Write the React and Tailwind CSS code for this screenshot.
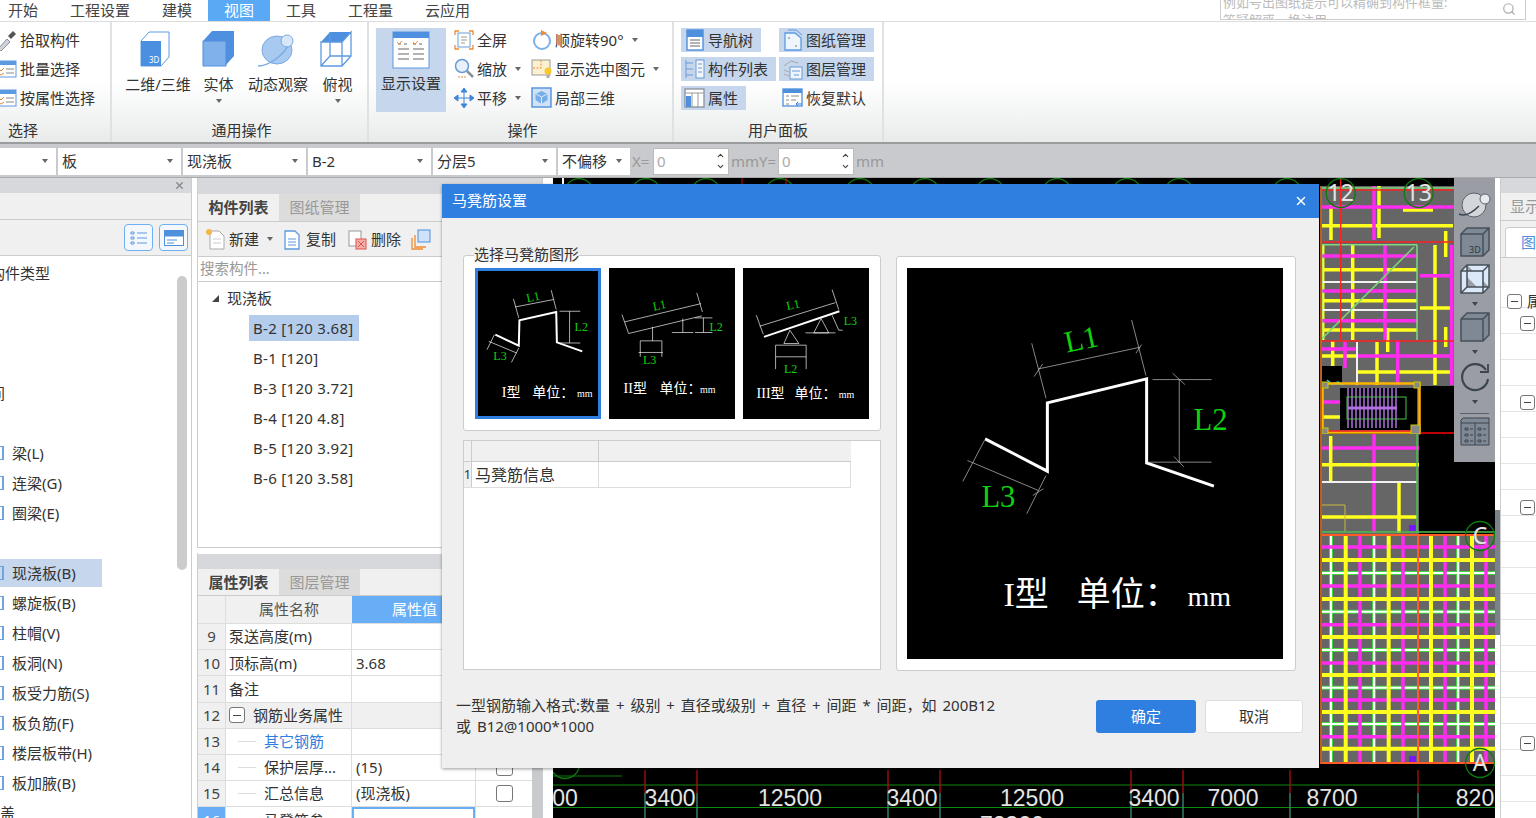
import React from 'react';
import { X, Search, ChevronUp, ChevronDown } from 'lucide-react';

const serif = '"Liberation Serif","Noto Sans CJK SC",serif';
const sans = '"Noto Sans","Noto Sans CJK SC",sans-serif';

const Caret = ({ className = '' }) => (
  <span className={`inline-block w-0 h-0 border-x-[3.5px] border-x-transparent border-t-[4px] border-t-[#666] ${className}`} />
);

// small ribbon icons
const Ico = ({ children, w = 22, h = 22, className = '' }) => (
  <svg width={w} height={h} viewBox="0 0 22 22" fill="none" className={`shrink-0 ${className}`}>{children}</svg>
);
const icons = {
  pick: <><path d="M2 20l9-10 3 3-9 9z" fill="#cfd4da" stroke="#8a9099" /><path d="M12 7l5-5 3 3-5 5z" fill="#555" /></>,
  batch: <><rect x="1" y="3" width="19" height="16" fill="#fff" stroke="#5c9ae0" /><rect x="1" y="3" width="19" height="4" fill="#5c9ae0" /><path d="M3 11l2 2 3-3M3 16l2 1 3-2" stroke="#e8862a" /><path d="M10 11h8M10 15h8" stroke="#888" /></>,
  full: <><path d="M2 6V2h4M16 2h4v4M2 16v4h4M16 20h4v-4" stroke="#ef8a32" strokeWidth="1.3" /><rect x="5" y="4" width="12" height="14" fill="#fff" stroke="#6a9bd4" /><path d="M8 8h6M8 11h6M8 14h4" stroke="#999" /></>,
  zoom: <><circle cx="9" cy="8" r="6.5" fill="#e8f1fb" stroke="#6a9bd4" strokeWidth="1.5" /><path d="M14 13l6 6" stroke="#8b9097" strokeWidth="2.5" /><path d="M5 19h8" stroke="#ef8a32" strokeDasharray="2 1" /></>,
  pan: <path d="M11 1l3 4H8zM11 21l3-4H8zM1 11l4-3v6zM21 11l-4-3v6zM5 11h12M11 5v12" fill="#3f86d8" stroke="#3f86d8" />,
  rotate: <><circle cx="11" cy="12" r="8" stroke="#7cb0e8" strokeWidth="2" /><path d="M10 1l6 3-6 3z" fill="#ef8a32" /></>,
  showsel: <><rect x="1" y="2" width="18" height="15" fill="#fdf0d0" stroke="#999" /><path d="M10 2v8H1" stroke="#ef8a32" strokeDasharray="2 1.5" /><circle cx="17" cy="13" r="3.5" fill="#f6c92f" /><path d="M15.500 17h3v3h-3z" fill="#aaa" /></>,
  local3d: <><rect x="1" y="1" width="19" height="19" fill="#cfe2f7" stroke="#4f90dc" strokeWidth="1.4" /><path d="M10.500 4l6 3v6l-6 4-6-4V7z" fill="#78aee8" /><path d="M10.500 10v7M5 7l5.500 3L16 7" stroke="#dbe9f8" /></>,
  nav: <><rect x="3" y="1" width="16" height="20" fill="#fff" stroke="#4f90dc" strokeWidth="1.4" /><path d="M3 1h16v7H3z" fill="#4f90dc" /><path d="M6 11h10M6 14h10M6 17h10" stroke="#666" /></>,
  list: <><rect x="12" y="2" width="8" height="18" fill="#f2f6fb" stroke="#6a9bd4" /><path d="M14 6h4M14 10h4M14 14h4M2 2v18M2 5h7M2 11h7M2 17h7" stroke="#6a9bd4" /></>,
  prop: <><rect x="1" y="2" width="19" height="18" fill="#fff" stroke="#8a9099" strokeWidth="1.3" /><path d="M1 6h19M8 6v14M14 6v14" stroke="#999" /><rect x="2" y="9" width="5" height="11" fill="#4f90dc" /></>,
  paper: <><path d="M3 4h10l6 5v12H3z" fill="#eef5fc" stroke="#5c9ae0" strokeWidth="1.3" /><path d="M6 1h8l6 5" stroke="#5c9ae0" /><path d="M7 8v2M15 17h-2" stroke="#777" /></>,
  layer: <><path d="M2 8l7-5 7 2M2 12l5 2M2 16l5 2" stroke="#aaa" /><rect x="8" y="9" width="12" height="12" fill="#eef5fc" stroke="#6a9bd4" /><path d="M10 13h8M12 17h5" stroke="#6a9bd4" /></>,
  reset: <><rect x="1" y="2" width="19" height="17" fill="#fff" stroke="#4f90dc" strokeWidth="1.3" /><rect x="1" y="2" width="19" height="4" fill="#4f90dc" /><path d="M4 9h3M9 9h8M4 13h3M9 13h5M4 17h3" stroke="#888" /><path d="M20 17h-6m2-2l-2 2 2 2" stroke="#2f7fdc" /></>,
  newdoc: <><path d="M5 3h9l5 5v13H5z" fill="#fff" stroke="#aaa" /><circle cx="4" cy="4" r="3" fill="#f4b64a" /><path d="M8 11h8M8 15h8" stroke="#ccc" /></>,
  copy: <><path d="M4 3h10l4 4v14H4z" fill="#fff" stroke="#5c9ae0" strokeWidth="1.3" /><path d="M7 11h8M7 14h8M7 17h8" stroke="#5c9ae0" /></>,
  del: <><rect x="3" y="3" width="12" height="15" fill="#fff" stroke="#999" /><rect x="10" y="11" width="10" height="10" fill="#f4b0a8" stroke="#d9534f" /><path d="M12 13l6 6m0-6l-6 6" stroke="#d9534f" /></>,
  stack: <><rect x="8" y="2" width="12" height="12" fill="#cfe2f7" stroke="#4f90dc" /><path d="M5 7v12h11M2 10v11h11" stroke="#ef8a32" strokeWidth="1.300" /></>,
};

const SmallBtn = ({ icon, label, caret, active, w, bleed }) => (
  <div className={`h-6 flex items-center whitespace-nowrap ${active ? 'bg-[#c5d6ed]' : ''} ${bleed ? '-ml-[7px]' : ''}`} style={w ? { width: w } : undefined}>
    <Ico className="ml-[3px] mr-[2px]">{icons[icon]}</Ico>
    <span>{label}</span>
    {caret && <Caret className="ml-2" />}
  </div>
);

const BigBtn = ({ children, label, caret, w }) => (
  <div className="flex flex-col items-center" style={{ width: w }}>
    <svg width="44" height="44" viewBox="0 0 44 44" fill="none">{children}</svg>
    <span className="mt-[2px] leading-5 whitespace-nowrap">{label}</span>
    {caret && <Caret className="mt-[5px]" />}
  </div>
);

const Group = ({ label, className, labelClass = '', children }) => (
  <div className={`relative flex flex-col h-full border-r-2 border-[#dfe1e2] ${className}`}>
    <div className="flex-1 min-h-0">{children}</div>
    <div className={`h-[22px] text-center leading-5 shrink-0 ${labelClass}`}>{label}</div>
  </div>
);

const Ribbon = () => (
  <div className="h-[122px] flex bg-gradient-to-b from-white via-white to-[#e9ebeb] border-b-2 border-[#9a9c9e] text-[15px] text-[#333] shrink-0">
    <Group label="选择" className="w-[112px]" labelClass="pr-[64px]">
      <div className="pt-[6px] flex flex-col gap-[5px] w-[112px]">
        <SmallBtn icon="pick" label="拾取构件" bleed />
        <SmallBtn icon="batch" label="批量选择" bleed />
        <SmallBtn icon="batch" label="按属性选择" bleed />
      </div>
    </Group>
    <Group label="通用操作" className="w-[257px]" labelClass="pl-[4px]">
      <div className="flex pt-[6px] pl-[15px]">
        <BigBtn label="二维/三维" w={62}>
          <path d="M5 13l8-9h20v25l-8 9H5z" fill="#fff" stroke="#5c9ae0" />
          <path d="M5 13h20v25H5z" fill="#4a8fe0" />
          <text x="13" y="35" fontSize="8" fill="#fff" fontFamily={sans}>3D</text>
        </BigBtn>
        <BigBtn label="实体" caret w={60}>
          <path d="M6 13l9-10h22v25l-9 10H6z" fill="#4f8fdf" />
          <path d="M6 13h23v25H6z" fill="#80b1ea" stroke="#4f8fdf" />
        </BigBtn>
        <BigBtn label="动态观察" w={60}>
          <ellipse cx="21" cy="22" rx="15" ry="14" fill="#a9caf0" stroke="#7aa9e2" />
          <path d="M2 38c10 0 26-10 32-24" stroke="#7aa9e2" strokeWidth="1.500" />
          <circle cx="31" cy="13" r="6" fill="#d7e7f8" stroke="#7aa9e2" />
        </BigBtn>
        <BigBtn label="俯视" caret w={60}>
          <path d="M5 14l9-10h21l-9 10z" fill="#4f8fdf" />
          <path d="M5 14h21v24H5zM26 14l9-10v24l-9 10M14 4v24h21M14 28l-9 10" stroke="#5c9ae0" strokeWidth="1.300" />
        </BigBtn>
      </div>
    </Group>
    <Group label="操作" className="w-[305px]" labelClass="pl-[4px]">
      <div className="flex pt-[6px] pl-[7px]">
        <div className="w-[70px] h-[84px] bg-[#c5d6ed] flex flex-col items-center">
          <svg width="38" height="38" viewBox="0 0 38 38" fill="none" className="mt-[3px]">
            <rect x="1" y="1" width="36" height="36" fill="#fff" stroke="#5c9ae0" />
            <rect x="1" y="1" width="36" height="6" fill="#4f8fdf" />
            <path d="M6 13h3m3 0h3m6 0h3m3 0h3M6 18h11M21 18h11M6 23h11M21 23h11M6 28h11M21 28h11" stroke="#999" strokeWidth="1.500" />
            <path d="M5 11l2 2 3-3M21 11l2 2 3-3" stroke="#ef8a32" />
          </svg>
          <span className="mt-[4px] leading-5 whitespace-nowrap">显示设置</span>
        </div>
        <div className="pl-[4px] w-[82px] flex flex-col gap-[5px]">
          <SmallBtn icon="full" label="全屏" />
          <SmallBtn icon="zoom" label="缩放" caret />
          <SmallBtn icon="pan" label="平移" caret />
        </div>
        <div className="flex flex-col gap-[5px]">
          <SmallBtn icon="rotate" label="顺旋转90°" caret />
          <SmallBtn icon="showsel" label="显示选中图元" caret />
          <SmallBtn icon="local3d" label="局部三维" />
        </div>
      </div>
    </Group>
    <Group label="用户面板" className="w-[210px]">
      <div className="flex pt-[6px] pl-[7px]">
        <div className="w-[98px] flex flex-col gap-[5px] items-start">
          <SmallBtn icon="nav" label="导航树" active w={80} />
          <SmallBtn icon="list" label="构件列表" active w={95} />
          <SmallBtn icon="prop" label="属性" active w={65} />
        </div>
        <div className="flex flex-col gap-[5px]">
          <SmallBtn icon="paper" label="图纸管理" active w={95} />
          <SmallBtn icon="layer" label="图层管理" active w={95} />
          <SmallBtn icon="reset" label="恢复默认" />
        </div>
      </div>
    </Group>
  </div>
);

const Select = ({ label, w }) => (
  <div className="h-[27px] bg-white flex items-center justify-between pl-[4px] pr-[8px] text-[15px] text-[#333] shrink-0" style={{ width: w }}>
    <span className="whitespace-nowrap">{label}</span>
    <Caret />
  </div>
);

const Spin = () => (
  <div className="w-[76px] h-[27px] bg-white border border-[#bbb] flex items-center justify-between pl-[3px] pr-[3px] text-[15px] text-[#aaa] shrink-0">
    <span>0</span>
    <span className="flex flex-col text-[#444]">
      <ChevronUp size={9} strokeWidth={3} />
      <ChevronDown size={9} strokeWidth={3} className="mt-[2px]" />
    </span>
  </div>
);

const Toolbar = () => (
  <div className="h-[34px] pt-[1px] bg-[#c8cacd] flex items-center gap-[2px] border-b border-[#aaa] shrink-0 text-[15px] text-[#999]">
    <Select label="" w={56} />
    <Select label="板" w={123} />
    <Select label="现浇板" w={123} />
    <Select label="B-2" w={123} />
    <Select label="分层5" w={123} />
    <Select label="不偏移" w={72} />
    <span className="w-[19px]">X=</span>
    <Spin />
    <span className="w-[45px] whitespace-nowrap">mmY=</span>
    <Spin />
    <span>mm</span>
  </div>
);

const leftRows = [
  { t: '构件类型', ml: -10 }, {}, {}, {},
  { t: '房间', ml: -25 }, {},
  { t: '梁(L)', i: 1 }, { t: '连梁(G)', i: 1 }, { t: '圈梁(E)', i: 1 }, {},
  { t: '现浇板(B)', i: 1, sel: true }, { t: '螺旋板(B)', i: 1 }, { t: '柱帽(V)', i: 1 }, { t: '板洞(N)', i: 1 },
  { t: '板受力筋(S)', i: 1 }, { t: '板负筋(F)', i: 1 }, { t: '楼层板带(H)', i: 1 }, { t: '板加腋(B)', i: 1 },
  { t: '楼盖', ml: -15 },
];

const LeftPanel = () => (
  <div className="w-[192px] shrink-0 border-r border-[#ccc] bg-white flex flex-col overflow-hidden text-[15px] text-[#333]">
    <div className="h-[15px] bg-[#d6d8db] flex justify-end items-center pr-[6px] shrink-0">
      <X size={11} strokeWidth={3} className="text-[#888]" />
    </div>
    <div className="h-[27px] bg-[#f0f0f0] border-b border-[#ccc] shrink-0" />
    <div className="h-[36px] bg-[#f0f0f0] border-b border-[#ccc] flex justify-end items-center gap-[6px] pr-[3px] shrink-0">
      <div className="w-[29px] h-[27px] border border-[#6fb0f2] rounded bg-[#f4f8fd] flex items-center justify-center">
        <svg width="18" height="15" viewBox="0 0 18 15" fill="none" stroke="#5c9ae0"><path d="M1 2h3v2H1zM1 7h3v2H1zM1 12h3v2H1zM7 3h10M7 8h10M7 13h10" /></svg>
      </div>
      <div className="w-[29px] h-[27px] border border-[#6fb0f2] rounded bg-[#f4f8fd] flex items-center justify-center">
        <svg width="20" height="16" viewBox="0 0 20 16" fill="none"><rect x=".5" y=".5" width="19" height="15" fill="#fff" stroke="#4f90dc" /><rect x=".5" y=".5" width="19" height="6" fill="#4f90dc" /><path d="M3 10h10M3 13h7" stroke="#4f90dc" /></svg>
      </div>
    </div>
    <div className="flex-1 relative pt-[2px]">
      {leftRows.map((r, i) => (
        <div key={i} className="h-[30px] flex items-center whitespace-nowrap">
          {r.sel && <div className="absolute left-0 w-[102px] h-[28px] bg-[#c5d6ed]" />}
          {r.i && <span className="relative w-[4px] h-[14px] border-r-2 border-y border-[#6fa3e0] mr-[8px]" />}
          <span className="relative" style={r.ml ? { marginLeft: r.ml } : undefined}>{r.t}</span>
        </div>
      ))}
      {/* scrollbar */}
      <div className="absolute right-[4px] top-[20px] w-[10px] h-[294px] rounded-full bg-[#cccccc]" />
    </div>
  </div>
);

const TabStrip = ({ a, b, h = 'h-[28px]' }) => (
  <div className={`${h} flex border-b border-[#ccc] bg-[#f0f0f0] text-[15px] shrink-0`}>
    <div className="w-[81px] flex items-center justify-center font-bold text-[#444]">{a}</div>
    <div className="w-[81px] flex items-center justify-center bg-[#dcdcdc] text-[#999]">{b}</div>
  </div>
);

const treeItems = ['B-2 [120 3.68]', 'B-1 [120]', 'B-3 [120 3.72]', 'B-4 [120 4.8]', 'B-5 [120 3.92]', 'B-6 [120 3.58]'];

const ComponentList = () => (
  <div className="h-[370px] flex flex-col border border-t-0 border-[#ccc] bg-white shrink-0 overflow-hidden text-[#333]">
    <div className="h-[16px] bg-[#d6d8db] shrink-0" />
    <TabStrip a="构件列表" b="图纸管理" />
    <div className="h-[35px] bg-[#f0f0f0] border-b border-[#ccc] flex items-center pl-[7px] text-[15px] whitespace-nowrap shrink-0">
      <Ico>{icons.newdoc}</Ico><span className="ml-[2px]">新建</span><Caret className="ml-2 mr-[8px]" />
      <Ico>{icons.copy}</Ico><span className="ml-[3px] mr-[10px]">复制</span>
      <Ico>{icons.del}</Ico><span className="ml-[3px] mr-[9px]">删除</span>
      <Ico>{icons.stack}</Ico>
    </div>
    <div className="h-[25px] border-b border-[#ccc] flex items-center pl-[2px] text-[14.500px] text-[#999] shrink-0">搜索构件...</div>
    <div className="pt-[1px] text-[15px]">
      <div className="h-[30px] flex items-center pl-[14px]">
        <span className="w-0 h-0 border-l-[7px] border-l-transparent border-b-[7px] border-b-[#444] mr-[8px]" />
        <span>现浇板</span>
      </div>
      {treeItems.map((t, i) => (
        <div key={t} className="h-[30px] flex items-center pl-[51px]">
          <span className={`h-[26px] leading-[26px] px-[4px] tracking-[0.3px] whitespace-nowrap ${i === 0 ? 'bg-[#b5cdec] w-[110px]' : ''}`}>{t}</span>
        </div>
      ))}
    </div>
  </div>
);

const props = [
  { n: 9, name: '泵送高度(m)' },
  { n: 10, name: '顶标高(m)', v: '3.68' },
  { n: 11, name: '备注' },
  { n: 12, name: '钢筋业务属性', group: true },
  { n: 13, name: '其它钢筋', sub: true, link: true },
  { n: 14, name: '保护层厚...', sub: true, v: '(15)', check: true },
  { n: 15, name: '汇总信息', sub: true, v: '(现浇板)', check: true },
  { n: 16, name: '马凳筋参', sub: true, editing: true },
];

const PropList = () => (
  <div className="flex-1 flex min-h-0 mt-[5px] overflow-hidden">
    <div className="w-[335px] flex flex-col border-l border-[#ccc] bg-white text-[15px] text-[#333]">
      <div className="h-px shrink-0" />
      <div className="h-[15px] bg-[#d6d8db] shrink-0" />
      <TabStrip a="属性列表" b="图层管理" h="h-[27px]" />
      <div className="h-[28px] flex border-b border-[#ddd] shrink-0 bg-[#f0f0f0]">
        <div className="w-[28px] border-r border-[#ddd]" />
        <div className="w-[126px] flex items-center justify-center text-[#555]">属性名称</div>
        <div className="flex-1 bg-[#68aef7] text-white flex items-center pl-[40px]">属性值</div>
      </div>
      {props.map((p) => (
        <div key={p.n} className={`h-[26.200px] shrink-0 flex border-b border-[#ddd] ${p.group ? 'bg-[#f0f0f0]' : ''}`}>
          <div className={`w-[28px] shrink-0 border-r border-[#ddd] flex items-center justify-center ${p.editing ? 'bg-[#68aef7] text-white' : 'bg-[#f0f0f0] text-[#444]'}`}>{p.n}</div>
          <div className="w-[126px] shrink-0 flex items-center border-r border-[#ddd] whitespace-nowrap relative">
            {p.group && (
              <span className="ml-[3px] mr-[8px] w-[16px] h-[16px] border border-[#777] rounded-[3px] flex items-center justify-center bg-white">
                <span className="w-[8px] h-px bg-[#444]" />
              </span>
            )}
            {p.sub && <span className="ml-[12px] mr-[8px] w-[18px] h-px bg-[#ddd]" />}
            {!p.group && !p.sub && <span className="w-[3px]" />}
            <span className={p.link ? 'text-[#2f7fe0]' : ''}>{p.name}</span>
          </div>
          <div className={`w-[123px] shrink-0 flex items-center pl-[4px] ${p.editing ? 'border-2 border-[#68aef7]' : ''}`}>{p.v}</div>
          <div className="flex-1 flex items-center justify-center border-l border-[#ddd]">
            {p.check && <span className="w-[17px] h-[17px] border border-[#777] rounded-[3px] bg-white" />}
          </div>
        </div>
      ))}
    </div>
    <div className="w-[11px] bg-[#c8cacd]" />
  </div>
);

// CAD canvas, drawn in page coordinates
const magentaH = [547, 586, 624.7, 663, 700, 736.700];
const yellowH = [560, 599, 637, 675, 712, 748.700];
const whiteH = [573, 611.700, 650, 687.700, 724];
const whiteV = [1331, 1374, 1458];
const yellowV = [1345.700, 1388.700, 1431, 1472];
const magentaV = [1360, 1403, 1445, 1486];
const axisX = [579, 646, 706, 780, 860, 925, 990, 1057, 1127, 1179, 1287];
const dimTicks = [645, 697, 888, 940, 1131, 1183, 1290, 1418];
const dimLabels = [['00', 565], ['3400', 670], ['12500', 790], ['3400', 912], ['12500', 1032], ['3400', 1154], ['7000', 1233], ['8700', 1332], ['820', 1475]];

const seg = (color, w, rows) => rows.map((r, i) => <line key={i} x1={r[0]} y1={r[1]} x2={r[2]} y2={r[3]} stroke={color} strokeWidth={w} />);

const Axis = ({ x, y, t }) => (
  <g>
    <circle cx={x} cy={y} r="14.500" stroke="#0d7a0d" strokeWidth="1.300" fill="none" />
    {t && <text x={x} y={y + 8} textAnchor="middle" fontSize="23" fill="#e4e4e4" fontFamily={sans}>{t}</text>}
  </g>
);

const CadDrawing = () => (
  <svg viewBox="553 178 942 640" className="block w-full h-full">
    <rect x="553" y="178" width="942" height="640" fill="#000" />
    {/* upper block */}
    <rect x="1320" y="186" width="134" height="200" fill="#666" />
    {seg('#ffff1e', 3.5, [[1331, 205, 1331, 240], [1379, 186, 1379, 238], [1320, 225.7, 1453, 225.7], [1403, 210, 1433, 210], [1320, 269.7, 1417, 269.7], [1320, 300.7, 1417, 300.7], [1320, 330, 1417, 330], [1352.7, 245, 1352.7, 340], [1322.7, 245, 1322.7, 340], [1435, 245, 1435, 385], [1420, 308, 1453, 308], [1445.700, 231, 1445.700, 257], [1445.700, 327, 1445.700, 347], [1322, 356, 1358, 356], [1332.700, 341, 1332.700, 368], [1377, 342, 1377, 385], [1358, 372, 1453, 372], [1387.700, 328, 1387.700, 352]])}
    {seg('#ff2cf0', 3.5, [[1320, 207, 1454, 207], [1374, 186, 1374, 240], [1322, 256, 1417, 256], [1322, 291, 1417, 291], [1322, 320.700, 1417, 320.700], [1385, 245, 1385, 340], [1420, 275.700, 1453, 275.700], [1451.700, 245, 1451.700, 385], [1322, 349, 1358, 349], [1345, 340, 1345, 368], [1358, 356, 1453, 356], [1397.700, 340, 1397.700, 385]])}
    {seg('#f2f2f2', 2, [[1322, 282, 1417, 282], [1322, 310, 1417, 310], [1357, 342, 1357, 385]])}
    {seg('#7fd87f', 1.500, [[1321.700, 339, 1414, 247], [1321.700, 244.700, 1417, 244.700], [1321.700, 244.700, 1321.700, 340], [1417, 244.700, 1417, 340], [1320, 188, 1454, 188]])}
    {seg('#ff2020', 1.300, [[1320, 190, 1454, 190], [1320, 242, 1454, 242], [1320, 341, 1454, 341], [1340.700, 178, 1340.700, 340]])}
    {/* selected stair */}
    <rect x="1322" y="366" width="20" height="19" fill="#000" />
    <path d="M1327 380l5 4 6-2 6 3M1328 385h16" stroke="#14d8e8" strokeWidth="1.500" fill="none" />
    <rect x="1322" y="385" width="97" height="48" fill="#666" />
    <rect x="1340" y="388" width="77" height="42" fill="#000" />
    {seg('#ff2cf0', 3.5, [[1322, 402, 1340, 402]])}
    {seg('#ffff1e', 3.5, [[1322, 417, 1340, 417]])}
    {Array.from({ length: 13 }).map((_, i) => (
      <line key={i} x1={1348 + i * 4} y1="388" x2={1348 + i * 4} y2="428" stroke="#b070e0" strokeWidth="1.500" />
    ))}
    <line x1="1348" y1="408" x2="1397" y2="408" stroke="#b070e0" strokeWidth="3" />
    <rect x="1347" y="397" width="59" height="22" stroke="#4fc04f" fill="none" />
    <rect x="1322.500" y="383.500" width="97" height="49" stroke="#ffb400" strokeWidth="2.500" fill="none" />
    <line x1="1322" y1="431" x2="1417" y2="431" stroke="#ff2020" strokeWidth="1.500" />
    <line x1="1419" y1="433" x2="1454" y2="433" stroke="#ff0000" strokeWidth="1.500" />
    <rect x="1322" y="382" width="6" height="6" fill="#888" stroke="#cc0" />
    <rect x="1414" y="382" width="6" height="6" fill="#888" stroke="#cc0" />
    <rect x="1322" y="428" width="6" height="6" fill="#888" stroke="#cc0" />
    <rect x="1411" y="425" width="9" height="9" fill="#888" stroke="#cc0" />
    {/* middle block */}
    <rect x="1320" y="434" width="99" height="101" fill="#666" />
    {seg('#ff2cf0', 3.5, [[1374, 434, 1374, 533], [1320, 448, 1419, 448]])}
    {seg('#ffff1e', 3.5, [[1330.700, 436, 1330.700, 482], [1320, 464.700, 1419, 464.700], [1399, 482, 1399, 533], [1322, 517, 1417, 517]])}
    {seg('#f2f2f2', 2, [[1322, 482, 1417, 482]])}
    <path d="M1320 505h25v26" stroke="#c8b93a" fill="none" />
    <rect x="1409" y="525" width="7" height="6" fill="#7a16ff" />
    {seg('#4fc04f', 1.500, [[1417, 434, 1417, 533], [1321, 532, 1495, 532]])}
    {/* lower grid */}
    <rect x="1320" y="535" width="175" height="228" fill="#666" />
    {seg('#3fd83f', 4, whiteH.map((y) => [1320, y, 1495, y]))}
    {seg('#3fd83f', 4, whiteV.map((x) => [x, 535, x, 763]))}
    {seg('#ffffff', 2, whiteH.map((y) => [1320, y, 1495, y]))}
    {seg('#ffffff', 2, whiteV.map((x) => [x, 535, x, 763]))}
    {seg('#ff2cf0', 3.5, magentaH.map((y) => [1320, y, 1495, y]))}
    {seg('#ff2cf0', 3.5, magentaV.map((x) => [x, 535, x, 763]))}
    {seg('#ffff1e', 4, yellowH.map((y) => [1320, y, 1495, y]))}
    {seg('#ffff1e', 4, yellowV.map((x) => [x, 535, x, 763]))}
    {seg('#ff5a28', 2, [[1418, 535, 1418, 763], [1320, 535, 1495, 535], [1320, 763, 1495, 763]])}
    <rect x="1320" y="186" width="2" height="577" fill="#c8641e" />
    <rect x="1409" y="756" width="7" height="6" fill="#7a16ff" />
    {/* axes */}
    {axisX.map((x) => <Axis key={x} x={x} y={193} />)}
    <Axis x={1340.700} y={193} t="12" />
    <Axis x={1418.700} y={193} t="13" />
    <Axis x={1480} y={536} t="C" />
    <Axis x={1480} y={763} t="A" />
    <Axis x={565} y={764} />
    <line x1="553" y1="776" x2="622" y2="776" stroke="#0d7a0d" />
    <line x1="563" y1="178" x2="563" y2="184" stroke="#fff" strokeWidth="2" />
    <line x1="742" y1="178" x2="742" y2="184" stroke="#d00" />
    <line x1="786" y1="178" x2="786" y2="184" stroke="#d00" />
    {/* dimension lines */}
    <line x1="553" y1="785" x2="1495" y2="785" stroke="#0d8a0d" />
    <line x1="553" y1="807.500" x2="1495" y2="807.500" stroke="#0d8a0d" />
    {dimTicks.map((x) => (
      <g key={x}>
        <line x1={x} y1="770" x2={x} y2="793" stroke="#b01010" strokeWidth="1.300" />
        <line x1={x} y1="793" x2={x} y2="818" stroke="#3f8f7f" strokeWidth="1.300" />
      </g>
    ))}
    {dimLabels.map(([t, x], i) => (
      <text key={i} x={x} y="806" textAnchor="middle" fontSize="23" fill="#e4e4e4" fontFamily='"Liberation Sans",sans-serif'>{t}</text>
    ))}
    <text x="1012" y="833" textAnchor="middle" fontSize="23" fill="#e4e4e4" fontFamily='"Liberation Sans",sans-serif'>72300</text>
  </svg>
);

const ToolStrip = () => (
  <div className="absolute right-0 top-0 w-[41px] h-[284px] bg-[#9a9ea4] flex flex-col items-center pt-[12px]">
    <svg width="34" height="30" viewBox="0 0 34 30" fill="none">
      <circle cx="16" cy="15" r="12" fill="#d3d7dc" stroke="#59616b" />
      <circle cx="27" cy="9" r="5" fill="#e8eaed" stroke="#59616b" />
      <path d="M1 24c6 3 14-2 20-8" stroke="#3c4550" strokeWidth="1.500" />
    </svg>
    <svg width="32" height="32" viewBox="0 0 32 32" className="mt-[6px]" fill="#7e8995" stroke="#46505b" strokeWidth="1.500">
      <path d="M2 8l6-6h22v22l-6 6H2zM2 8h22v22M24 8l6-6" />
      <text x="10" y="27" fontSize="9" fill="#2f3740" stroke="none" fontFamily={sans}>3D</text>
    </svg>
    <svg width="32" height="32" viewBox="0 0 32 32" className="mt-[5px]" fill="#dbe9f8" stroke="#46505b" strokeWidth="1.500">
      <path d="M2 8l6-6h22v22l-6 6H2zM2 8h22v22M24 8l6-6M8 2v22h22M8 24l-6 6" />
    </svg>
    <Caret className="mt-[7px] !border-t-[#3c4550]" />
    <svg width="32" height="32" viewBox="0 0 32 32" className="mt-[5px]" fill="#7e8995" stroke="#46505b" strokeWidth="1.500">
      <path d="M2 8l6-6h22v22l-6 6H2zM2 8h22v22M24 8l6-6" />
    </svg>
    <Caret className="mt-[7px] !border-t-[#3c4550]" />
    <svg width="32" height="32" viewBox="0 0 32 32" className="mt-[7px]" fill="none" stroke="#3c4550" strokeWidth="2.200">
      <path d="M27 9A13 13 0 1 0 29 18" /><path d="M29 3v8h-8" strokeWidth="1.800" />
    </svg>
    <Caret className="mt-[7px] !border-t-[#3c4550]" />
    <div className="w-[29px] h-px bg-[#59616b] mt-[9px]" />
    <svg width="30" height="30" viewBox="0 0 30 30" className="mt-[3px]" fill="#7e8995" stroke="#3c4550">
      <path d="M1 3l2-2h26v27H1z" /><path d="M1 6h28M15 6v22M5 11h3v2H5zM5 17h3v2H5zM5 23h3v2H5zM18 11h3v2h-3zM18 17h3v2h-3zM18 23h3v2h-3zM10 12h3M10 18h3M10 24h3M23 12h3M23 18h3M23 24h3" />
    </svg>
  </div>
);

const RightPanel = () => (
  <div className="flex-1 relative overflow-hidden bg-white border-l border-l-[#ccc]">
    <div className="h-[15px] bg-[#d6d8db]" />
    <div className="h-[28px] bg-[#f0f0f0] border-b border-[#ccc] flex items-center pl-[9px] text-[15px] text-[#999] whitespace-nowrap">显示设置</div>
    <div className="h-[37px] bg-[#f0f0f0] border-b border-[#ccc] flex items-end pl-[4px]">
      <div className="w-[40px] h-[30px] bg-white border border-b-0 border-[#ccc] rounded-t flex items-center pl-[15px] text-[15px] text-[#4f90dc] whitespace-nowrap">图层</div>
    </div>
    <div className="h-[24px] bg-[#f0f0f0] border-b border-[#ddd]" />
    {[{ y: 298, x: 1507, t: '属' }, { y: 324, x: 1520 }, { y: 403, x: 1520 }, { y: 508, x: 1520 }, { y: 744, x: 1520 }].map((m) => (
      <div key={m.y} className="absolute flex items-center" style={{ top: m.y - 178 - 8, left: m.x - 1501 }}>
        <span className="w-[15px] h-[15px] border border-[#777] rounded-[3px] flex items-center justify-center bg-white">
          <span className="w-[7px] h-px bg-[#444]" />
        </span>
        {m.t && <span className="ml-[5px] text-[15px] text-[#333]">{m.t}</span>}
      </div>
    ))}
    {Array.from({ length: 21 }).map((_, i) => (
      <div key={i} className="h-[26px] border-b border-[#e5e5e5]" />
    ))}
  </div>
);

const Thumb = ({ box, selected, children }) => (
  <div className={`w-[126px] h-[151px] bg-black shrink-0 ${selected ? 'border-[3px] border-[#2e7fe0]' : ''}`}>
    <svg viewBox={box} className="block w-full h-full" fill="none" stroke="#fff" strokeWidth="2">{children}</svg>
  </div>
);

const G = ({ x, y, r, s = 36, children }) => (
  <text x={x} y={y} fontSize={s} fill="#10d010" stroke="none" textAnchor="middle" fontFamily={serif} transform={r ? `rotate(${r} ${x} ${y})` : undefined}>{children}</text>
);
const Cap = ({ x, x2, x3, y, s, mm, label }) => (
  <text x={x} y={y} fontSize={s} fill="#fff" stroke="none" fontFamily={serif}>
    {label}<tspan x={x2}>单位：</tspan><tspan x={x3} fontSize={mm}>mm</tspan>
  </text>
);

const Thumbs = () => (
  <div className="flex gap-[8px] pl-[11px] pt-[12px]">
    <Thumb box="116 275 359 433" selected>
      <path d="M168 465L238 498 240 422 350 397 352 488 428 515" strokeWidth="6" />
      <path d="M228 382L342 360M222 358L238 415M335 332L350 390M360 395H422M360 490H422M390 395V490M148 485L232 520M165 465L143 510M238 505L216 548" />
      <G x={283} y={364} r={-12}>L1</G><G x={425} y={454}>L2</G><G x={182} y={540}>L3</G>
      <Cap label="I型" x={187} x2={278} x3={412} y={652} s={42} mm={30} />
    </Thumb>
    <Thumb box="506 263 379 454">
      <path d="M553 425L783 370M545 403L565 460M770 338L787 395M565 460L785 407M637 440V482M600 482H665M600 482V530M665 482V530M595 517H668M728 415V457M695 457H760M765 457H817M765 413H817M790 413V457" />
      <G x={660} y={387} r={-12}>L1</G><G x={828} y={451}>L2</G><G x={628} y={552}>L3</G>
      <Cap label="II型" x={550} x2={658} x3={780} y={638} s={42} mm={30} />
    </Thumb>
    <Thumb box="907 263 379 454">
      <path d="M970 470L1197 393" strokeWidth="6" />
      <path d="M957 438L1185 367M947 405L968 462M1175 328L1195 388M1048 450L1030 490H1075ZM1005 495H1097V530H1005ZM1005 530V567M1097 530V567M1142 415L1120 458H1165ZM1095 458H1185M1175 405L1195 450H1207" />
      <G x={1060} y={385} r={-12}>L1</G><G x={1230} y={433}>L3</G><G x={1050} y={578}>L2</G>
      <Cap label="III型" x={948} x2={1062} x3={1195} y={655} s={42} mm={30} />
    </Thumb>
  </div>
);

const Dialog = () => (
  <div className="absolute left-[442px] top-[184px] w-[877px] h-[584px] bg-[#efefef] shadow-[0_1px_3px_rgba(0,0,0,0.4)] flex flex-col text-[#333] z-10">
    <div className="h-[34px] bg-[#2e7fe0] flex items-center justify-between px-[10px] text-white text-[15px] shrink-0">
      <span className="-mt-[2px]">马凳筋设置</span>
      <X size={14} strokeWidth={2.500} className="mr-[1px]" />
    </div>
    <div className="flex pl-[21px] pt-[37px] gap-[15px]">
      <div className="w-[418px] shrink-0">
        <div className="relative h-[176px] bg-white border border-[#ccc] rounded-[3px]">
          <span className="absolute left-[10px] -top-[12px] text-[15px] leading-5 bg-gradient-to-b from-[#efefef] via-[#efefef] to-white whitespace-nowrap">选择马凳筋图形</span>
          <Thumbs />
        </div>
        <div className="mt-[9px] h-[230px] bg-white border border-[#ccc] text-[16px]">
          <div className="w-[387px] h-[21px] flex bg-[#f0f0f0] border-b border-[#ccc]">
            <div className="w-[8px] border-r border-[#ccc]" />
            <div className="w-[127px] border-r border-[#ccc]" />
          </div>
          <div className="w-[387px] h-[26px] flex border-b border-r border-[#ddd] items-center">
            <div className="w-[8px] h-full bg-[#f0f0f0] border-r border-[#ccc] text-[13px] flex items-center justify-center">1</div>
            <div className="w-[127px] h-full border-r border-[#ddd] flex items-center pl-[3px] whitespace-nowrap">马凳筋信息</div>
          </div>
        </div>
      </div>
      <div className="w-[400px] h-[415px] mt-[1px] bg-white border border-[#ccc] rounded-[3px] pl-[10px] pt-[11px]">
        <div className="w-[376px] h-[391px] bg-black">
          <svg viewBox="52 52 1126 1174" className="block w-full h-full" fill="none" stroke="#c8c8c8" strokeWidth="2">
            <path d="M285 565L472 662V457L770 385V637L972 707" stroke="#fff" strokeWidth="9" />
            <path d="M445 355L750 290M425 278L468 443M725 208L768 375M432 378L458 340M738 308L755 282M788 387H965M775 635H965M868 387V635M848 368L885 402M852 618L882 650M232 630L445 720M283 570L218 693M468 675L410 790M428 735L460 715" />
            <G x={580} y={296} r={-12} s={92}>L1</G>
            <G x={962} y={538} s={92}>L2</G>
            <G x={325} y={770} s={92}>L3</G>
            <Cap label="I型" x={340} x2={560} x3={893} y={1066} s={102} mm={84} />
          </svg>
        </div>
      </div>
    </div>
    <div className="flex justify-between pl-[14px] pr-[16px] mt-[23px] text-[15px] leading-[21px] text-[#333]">
      <p className="pt-[1px] [word-spacing:2px]">一型钢筋输入格式:数量 + 级别 + 直径或级别 + 直径 + 间距 * 间距，如 200B12<br />或 B12@1000*1000</p>
      <div className="flex gap-[9px] mt-[6px]">
        <button className="w-[100px] h-[33px] bg-[#2e7fe0] text-white rounded-[3px]">确定</button>
        <button className="w-[98px] h-[33px] bg-white border border-[#ddd] rounded-[3px]">取消</button>
      </div>
    </div>
  </div>
);

export default function App() {
  return (
    <div className="relative w-[1536px] h-[818px] overflow-hidden bg-white flex flex-col font-['Noto_Sans','Noto_Sans_CJK_SC',sans-serif]">
      {/* menu bar */}
      <div className="h-[22px] flex justify-between border-b border-[#ddd] text-[15px] text-[#444] shrink-0">
        <div className="flex -ml-2">
          {['开始', '工程设置', '建模', '视图', '工具', '工程量', '云应用'].map((t) => (
            <div key={t} className={`px-4 leading-[21px] whitespace-nowrap ${t === '视图' ? 'bg-[#5aa9f5] text-white' : ''}`}>{t}</div>
          ))}
        </div>
        <div className="w-[306px] h-[20px] mr-[10px] border border-[#ccc] border-t-0 relative overflow-hidden text-[13px] leading-[18px] text-[#bbb] pl-[2px]">
          <div className="-mt-[7px] whitespace-nowrap">例如号出图纸提示可以精确到构件框量:</div>
          <div className="whitespace-nowrap">答疑解惑，换注用</div>
          <Search size={14} className="absolute right-[9px] top-[2px] text-[#aaa]" />
        </div>
      </div>
      <Ribbon />
      <Toolbar />
      <div className="flex-1 flex min-h-0">
        <LeftPanel />
        <div className="w-[356px] ml-[5px] shrink-0 flex flex-col pr-[10px] min-h-0 overflow-hidden">
          <ComponentList />
          <PropList />
        </div>
        <div className="w-[942px] relative shrink-0">
          <CadDrawing />
          <ToolStrip />
        </div>
        {/* canvas scrollbar */}
        <div className="w-[5px] shrink-0 bg-white pt-[332px]">
          <div className="h-[125px] bg-[#7a828a]" />
        </div>
        <RightPanel />
      </div>
      <Dialog />
    </div>
  );
}
